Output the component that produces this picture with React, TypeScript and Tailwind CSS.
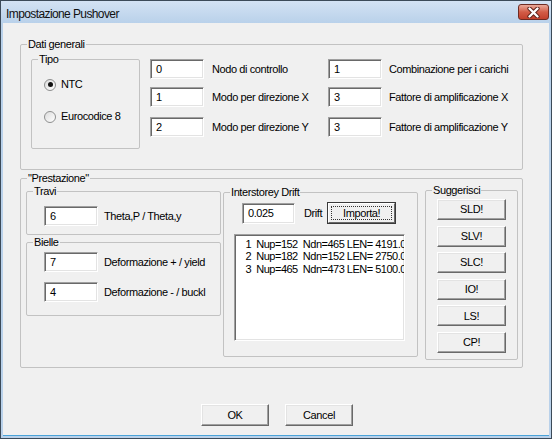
import type { ReactNode } from 'react';

// Win7 basic dialog: "Impostazione Pushover"

function GroupBox({ label, className, children }: { label: string; className: string; children?: ReactNode }) {
  return (
    <fieldset className={`border border-[#c2c2c2] rounded-[2px] shrink-0 ${className}`}>
      <legend className="ml-[6px] px-[1px] leading-[13px]">{label}</legend>
      {children}
    </fieldset>
  );
}

function TextBox({ value, className }: { value: string; className: string }) {
  return (
    <div
      className={`bg-white border border-t-[#a0a0a0] border-l-[#a0a0a0] border-r-white border-b-white shadow-[inset_1px_1px_0_#696969,inset_-1px_-1px_0_#e3e3e3] pl-[5px] pt-[3px] leading-[13px] shrink-0 ${className}`}
    >
      {value}
    </div>
  );
}

function Btn({ label, className }: { label: string; className: string }) {
  return (
    <div
      className={`bg-[#f0f0f0] border border-t-white border-l-white border-r-[#696969] border-b-[#696969] shadow-[inset_-1px_-1px_0_#a0a0a0,inset_1px_1px_0_#e3e3e3] flex items-center justify-center shrink-0 ${className}`}
    >
      {label}
    </div>
  );
}

function Radio({ label, checked, className }: { label: string; checked?: boolean; className: string }) {
  return (
    <div className={`flex items-center h-[13px] ${className}`}>
      <span className="w-[12px] h-[12px] rounded-full border border-[#8e8f8f] bg-linear-to-br from-[#dcdcdc] to-white flex items-center justify-center">
        {checked && <span className="w-[5px] h-[5px] rounded-full bg-[#111]" />}
      </span>
      <span className="ml-[5px]">{label}</span>
    </div>
  );
}

function InputRow({ value, label, className }: { value: string; label: string; className: string }) {
  return (
    <div className={`flex items-center ${className}`}>
      <TextBox value={value} className="w-[54px] h-[20px]" />
      <span className="ml-[6px] whitespace-nowrap">{label}</span>
    </div>
  );
}

const DATI = [
  { a: '0', la: 'Nodo di controllo', b: '1', lb: 'Combinazione per i carichi', mt: 'mt-[6px]' },
  { a: '1', la: 'Modo per direzione X', b: '3', lb: 'Fattore di amplificazione X', mt: 'mt-[8px]' },
  { a: '2', la: 'Modo per direzione Y', b: '3', lb: 'Fattore di amplificazione Y', mt: 'mt-[10px]' },
];

const DRIFTS = [
  ' 1  Nup=152  Ndn=465 LEN= 4191.0',
  ' 2  Nup=182  Ndn=152 LEN= 2750.0',
  ' 3  Nup=465  Ndn=473 LEN= 5100.0',
];

const SUGG = ['SLD!', 'SLV!', 'SLC!', 'IO!', 'LS!', 'CP!'];

export default function App() {
  return (
    <div className="w-[552px] h-[439px] bg-[#b9d1ea] border border-[#3c4a58] flex flex-col font-['Liberation_Sans',Arial,sans-serif] text-[11px] tracking-[-0.4px] text-black select-none">
      {/* title bar */}
      <div className="h-[22px] shrink-0 flex items-start justify-between pl-[5px] pr-[2px] bg-linear-to-b from-[#d3e2f3] to-[#b9d1ea]">
        <span className="mt-[4px] text-[12px] tracking-[-0.6px] text-[#111]">Impostazione Pushover</span>
        <div className="mt-[3px] w-[31px] h-[16px] rounded-[3px] border border-[#6e2b22] bg-linear-to-b from-[#e9a99a] via-[#d25c47] to-[#c2402c] flex items-center justify-center">
          <svg width="13" height="11" viewBox="0 0 13 11">
            <path d="M2.5 1.5 L10.5 9.5 M10.5 1.5 L2.5 9.5" stroke="#5a1e16" strokeWidth="4.2" strokeLinecap="round" />
            <path d="M2.5 1.5 L10.5 9.5 M10.5 1.5 L2.5 9.5" stroke="#fff" strokeWidth="2.4" strokeLinecap="round" />
          </svg>
        </div>
      </div>

      {/* client area */}
      <div className="flex-1 mx-[2px] mb-[2px] bg-[#f0f0f0] border-b border-[#4aa3d8] flex flex-col">
        <GroupBox label="Dati generali" className="mt-[15px] ml-[17px] w-[503px] h-[132px]">
          <div className="flex items-start mt-[2px] ml-[10px]">
            <GroupBox label="Tipo" className="w-[109px] h-[96px]">
              <Radio label="NTC" checked className="mt-[12px] ml-[12px]" />
              <Radio label="Eurocodice 8" className="mt-[19px] ml-[12px]" />
            </GroupBox>
            <div className="ml-[10px] flex flex-col">
              {DATI.map((r) => (
                <div key={r.la} className={`flex items-center ${r.mt}`}>
                  <TextBox value={r.a} className="w-[54px] h-[20px]" />
                  <span className="ml-[8px] w-[116px] whitespace-nowrap">{r.la}</span>
                  <TextBox value={r.b} className="w-[54px] h-[20px]" />
                  <span className="ml-[7px] whitespace-nowrap">{r.lb}</span>
                </div>
              ))}
            </div>
          </div>
        </GroupBox>

        <GroupBox label={'"Prestazione"'} className="mt-[2px] ml-[17px] w-[503px] h-[196px]">
          <div className="flex items-start ml-[5px]">
            <div className="flex flex-col">
              <GroupBox label="Travi" className="w-[195px] h-[50px]">
                <InputRow value="6" label="Theta,P / Theta,y" className="mt-[8px] ml-[17px]" />
              </GroupBox>
              <GroupBox label="Bielle" className="mt-[1px] w-[195px] h-[80px]">
                <InputRow value="7" label="Deformazione + / yield" className="mt-[3px] ml-[17px]" />
                <InputRow value="4" label="Deformazione - / buckl" className="mt-[10px] ml-[17px]" />
              </GroupBox>
            </div>

            <GroupBox label="Interstorey Drift" className="ml-[2px] mt-[1px] w-[195px] h-[171px]">
              <div className="flex items-center mt-[3px] ml-[18px]">
                <TextBox value="0.025" className="w-[53px] h-[21px]" />
                <span className="ml-[9px]">Drift</span>
                <div className="ml-[5px] w-[69px] h-[22px] border border-[#3a3a3a] shrink-0">
                  <div className="w-full h-full bg-[#f0f0f0] border border-t-white border-l-white border-r-[#696969] border-b-[#696969] p-[2px]">
                    <div className="w-full h-full border border-dotted border-[#333] flex items-center justify-center">
                      Importa!
                    </div>
                  </div>
                </div>
              </div>
              <div className="mt-[10px] ml-[10px] w-[171px] h-[107px] bg-white border border-t-[#a0a0a0] border-l-[#a0a0a0] border-r-white border-b-white shadow-[inset_1px_1px_0_#696969,inset_-1px_-1px_0_#e3e3e3] overflow-hidden pt-[3px] pl-[8px]">
                {DRIFTS.map((d) => (
                  <div key={d} className="whitespace-pre leading-[12.33px] tracking-[-0.5px]">
                    {d}
                  </div>
                ))}
              </div>
            </GroupBox>

            <GroupBox label="Suggerisci" className="ml-[7px] -mt-px w-[93px] h-[176px]">
              <div className="flex flex-col gap-[5.6px] mt-[2px] ml-[11px]">
                {SUGG.map((s) => (
                  <Btn key={s} label={s} className="w-[69px] h-[21px]" />
                ))}
              </div>
            </GroupBox>
          </div>
        </GroupBox>

        <div className="flex mt-[36px] ml-[198px]">
          <Btn label="OK" className="w-[68px] h-[22px]" />
          <Btn label="Cancel" className="ml-[16px] w-[68px] h-[22px]" />
        </div>
      </div>
    </div>
  );
}
